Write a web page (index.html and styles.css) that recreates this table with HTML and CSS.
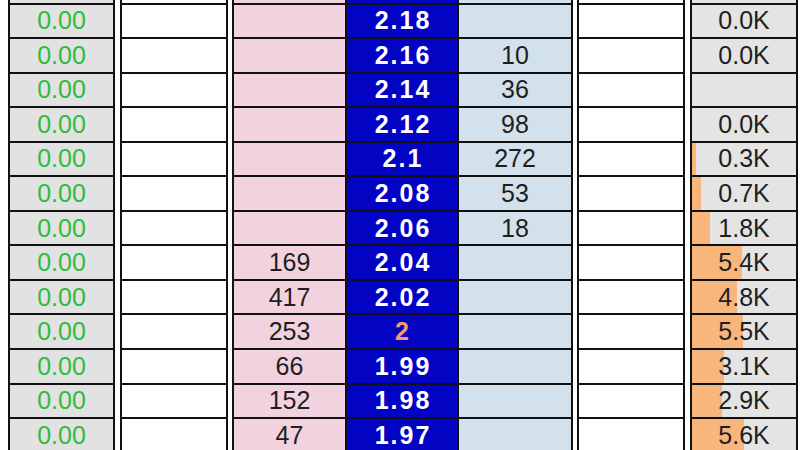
FILE: index.html
```html
<!DOCTYPE html>
<html>
<head>
<meta charset="utf-8">
<link rel="stylesheet" href="styles.css">
</head>
<body>
<div class="ladder">
  <div class="row"><div class="c c1"></div><div class="c c2"></div><div class="c c3"></div><div class="c c4"></div><div class="c c5"></div><div class="c c6"></div><div class="c c7"></div></div>
  <div class="row"><div class="c c1">0.00</div><div class="c c2"></div><div class="c c3"></div><div class="c c4">2.18</div><div class="c c5"></div><div class="c c6"></div><div class="c c7">0.0K</div></div>
  <div class="row"><div class="c c1">0.00</div><div class="c c2"></div><div class="c c3"></div><div class="c c4">2.16</div><div class="c c5">10</div><div class="c c6"></div><div class="c c7">0.0K</div></div>
  <div class="row"><div class="c c1">0.00</div><div class="c c2"></div><div class="c c3"></div><div class="c c4">2.14</div><div class="c c5">36</div><div class="c c6"></div><div class="c c7"></div></div>
  <div class="row"><div class="c c1">0.00</div><div class="c c2"></div><div class="c c3"></div><div class="c c4">2.12</div><div class="c c5">98</div><div class="c c6"></div><div class="c c7">0.0K</div></div>
  <div class="row"><div class="c c1">0.00</div><div class="c c2"></div><div class="c c3"></div><div class="c c4">2.1</div><div class="c c5">272</div><div class="c c6"></div><div class="c c7" style="--w:4px">0.3K</div></div>
  <div class="row"><div class="c c1">0.00</div><div class="c c2"></div><div class="c c3"></div><div class="c c4">2.08</div><div class="c c5">53</div><div class="c c6"></div><div class="c c7" style="--w:9px">0.7K</div></div>
  <div class="row"><div class="c c1">0.00</div><div class="c c2"></div><div class="c c3"></div><div class="c c4">2.06</div><div class="c c5">18</div><div class="c c6"></div><div class="c c7" style="--w:18px">1.8K</div></div>
  <div class="row"><div class="c c1">0.00</div><div class="c c2"></div><div class="c c3">169</div><div class="c c4">2.04</div><div class="c c5"></div><div class="c c6"></div><div class="c c7" style="--w:50px">5.4K</div></div>
  <div class="row"><div class="c c1">0.00</div><div class="c c2"></div><div class="c c3">417</div><div class="c c4">2.02</div><div class="c c5"></div><div class="c c6"></div><div class="c c7" style="--w:45px">4.8K</div></div>
  <div class="row"><div class="c c1">0.00</div><div class="c c2"></div><div class="c c3">253</div><div class="c c4 ltp">2</div><div class="c c5"></div><div class="c c6"></div><div class="c c7" style="--w:51px">5.5K</div></div>
  <div class="row"><div class="c c1">0.00</div><div class="c c2"></div><div class="c c3">66</div><div class="c c4">1.99</div><div class="c c5"></div><div class="c c6"></div><div class="c c7" style="--w:32px">3.1K</div></div>
  <div class="row"><div class="c c1">0.00</div><div class="c c2"></div><div class="c c3">152</div><div class="c c4">1.98</div><div class="c c5"></div><div class="c c6"></div><div class="c c7" style="--w:30px">2.9K</div></div>
  <div class="row"><div class="c c1">0.00</div><div class="c c2"></div><div class="c c3">47</div><div class="c c4">1.97</div><div class="c c5"></div><div class="c c6"></div><div class="c c7" style="--w:52px">5.6K</div></div>
</div>
</body>
</html>
```
FILE: styles.css
```css
html, body {
  margin: 0;
  padding: 0;
  background: #ffffff;
  overflow: hidden;
  width: 800px;
  height: 450px;
}

.ladder {
  margin-top: -30.05px;
  display: flex;
  flex-direction: column;
  font-family: "Liberation Sans", Arial, sans-serif;
  font-size: 25px;
  color: #1e1e1e;
}

.row {
  display: flex;
  height: 34.55px;
  flex: none;
}

.c {
  box-sizing: border-box;
  height: 100%;
  border-left: 2px solid #111;
  border-right: 2px solid #111;
  border-bottom: 2px solid #111;
  display: flex;
  align-items: center;
  justify-content: center;
  flex: none;
}

.c1 {
  margin-left: 8px;
  width: 107px;
  background: #e2e2e2;
  color: #2dbd3d;
}

.c2 {
  margin-left: 5px;
  width: 108px;
  background: #ffffff;
}

.c3 {
  margin-left: 4px;
  width: 115px;
  background: #f2d2de;
}

.c4 {
  border-left: 0;
  width: 112px;
  background: #0303c4;
  color: #ffffff;
  font-weight: bold;
  letter-spacing: 2px;
  padding-left: 2px;
}

.c4.ltp {
  color: #f59a6a;
}

.c5 {
  border-left: 0;
  width: 114px;
  background: #d3e1ed;
}

.c6 {
  margin-left: 4px;
  width: 108px;
  background: #ffffff;
}

.c7 {
  --w: 0px;
  margin-left: 5px;
  width: 108px;
  background: linear-gradient(to right, #f9b67c 0, #f9b67c var(--w), #e4e4e4 var(--w));
}
```
